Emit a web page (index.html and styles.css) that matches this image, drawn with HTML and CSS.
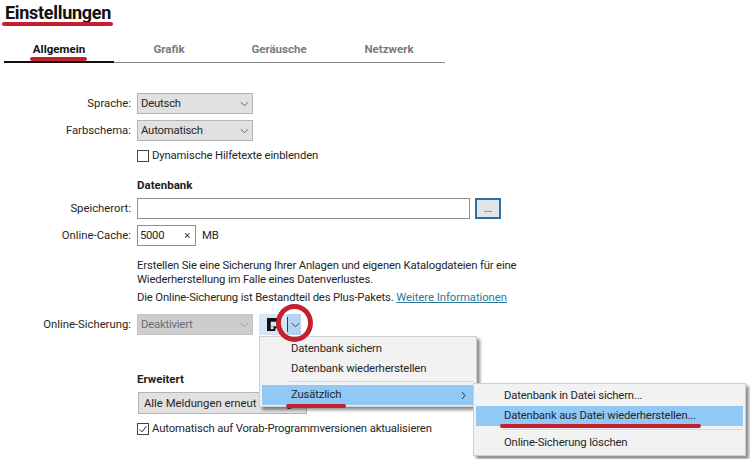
FILE: index.html
```html
<!DOCTYPE html>
<html lang="de">
<head>
<meta charset="utf-8">
<title>Einstellungen</title>
<link rel="stylesheet" href="styles.css">
</head>
<body>
<div class="page">
  <div class="title-row"><h1 class="title">Einstellungen<span class="mark mark-title"></span></h1></div>
  <nav class="tabs">
    <div class="tab active">Allgemein<span class="mark mark-tab"></span></div>
    <div class="tab">Grafik</div>
    <div class="tab">Geräusche</div>
    <div class="tab">Netzwerk</div>
  </nav>
  <main class="form">
    <div class="row row-sprache">
      <label class="label">Sprache:</label>
      <div class="select"><span>Deutsch</span><svg class="chev" viewBox="0 0 10 6"><path d="M1 1l4 4 4-4"/></svg></div>
    </div>
    <div class="row row-farb">
      <label class="label">Farbschema:</label>
      <div class="select"><span>Automatisch</span><svg class="chev" viewBox="0 0 10 6"><path d="M1 1l4 4 4-4"/></svg></div>
    </div>
    <div class="row row-check1">
      <span class="label"></span>
      <div class="check"><span class="box"></span><span>Dynamische Hilfetexte einblenden</span></div>
    </div>
    <div class="row row-head1">
      <span class="label"></span>
      <strong class="heading">Datenbank</strong>
    </div>
    <div class="row row-ort">
      <label class="label">Speicherort:</label>
      <div class="input wide"></div>
      <div class="dots">...</div>
    </div>
    <div class="row row-cache">
      <label class="label">Online-Cache:</label>
      <div class="input cache"><span>5000</span><span class="x">×</span></div>
      <span class="unit">MB</span>
    </div>
    <div class="row row-text">
      <span class="label"></span>
      <div class="notes">
        <p class="note">Erstellen Sie eine Sicherung Ihrer Anlagen und eigenen Katalogdateien für eine<br>Wiederherstellung im Falle eines Datenverlustes.</p>
        <p class="note note-2">Die Online-Sicherung ist Bestandteil des Plus-Pakets. <a class="link">Weitere Informationen</a></p>
      </div>
    </div>
    <div class="row row-backup">
      <label class="label">Online-Sicherung:</label>
      <div class="select disabled"><span>Deaktiviert</span><svg class="chev" viewBox="0 0 10 6"><path d="M1 1l4 4 4-4"/></svg></div>
      <div class="split">
        <span class="split-main">
          <svg class="save" viewBox="0 0 14 14"><path d="M0 0h11l3 3v11H0z"/><rect x="4" y="4" width="8" height="5" fill="#d5e6f6"/><rect x="4" y="9" width="3" height="3" fill="#d5e6f6"/><rect x="9" y="11" width="5" height="3" fill="#d5e6f6"/></svg>
        </span>
        <span class="split-arrow"><span class="split-bar"></span><svg class="chev" viewBox="0 0 10 6"><path d="M1 1l4 4 4-4"/></svg></span>
      </div>
    </div>
    <div class="row row-head2">
      <span class="label"></span>
      <strong class="heading">Erweitert</strong>
    </div>
    <div class="row row-all">
      <span class="label"></span>
      <div class="select all"><span>Alle Meldungen erneut anzeigen</span></div>
    </div>
    <div class="row row-check2">
      <span class="label"></span>
      <div class="check"><span class="box"><svg viewBox="0 0 12 12"><path d="M2 6.500l3 3 5-7"/></svg></span><span>Automatisch auf Vorab-Programmversionen aktualisieren</span></div>
    </div>
  </main>
</div>

<div class="menu menu-main">
  <div class="item">Datenbank sichern</div>
  <div class="item">Datenbank wiederherstellen</div>
  <div class="sep"></div>
  <div class="item hot">Zusätzlich<svg class="more" viewBox="0 0 5 9"><path d="M1 1l3 3.500-3 3.500"/></svg></div>
</div>
<div class="menu menu-sub">
  <div class="item">Datenbank in Datei sichern...</div>
  <div class="item hot">Datenbank aus Datei wiederherstellen...</div>
  <div class="sep"></div>
  <div class="item">Online-Sicherung löschen</div>
</div>

<span class="mark mark-zus"></span>
<span class="mark mark-aus"></span>
<span class="ring"></span>
</body>
</html>
```

FILE: styles.css
```css
* { box-sizing: border-box; }
html, body { margin: 0; padding: 0; background: #fff; }
body {
  width: 750px;
  height: 459px;
  overflow: hidden;
  position: relative;
  font-family: Roboto, "Noto Sans", sans-serif;
  font-size: 11.3px;
  line-height: 15px;
  color: #262626;
}
.page { padding: 1px 0 0 4px; }
.title-row { height: 23px; }
.title {
  position: relative;
  display: inline-block;
  margin: 0;
  padding-left: 1px;
  font-size: 18px;
  line-height: 23px;
  letter-spacing: -.3px;
  font-weight: 700;
  color: #111;
}
.mark { position: absolute; display: block; background: #c4202f; border-radius: 3px; }
.mark-title { left: -2px; right: -2px; top: 21px; height: 4px; }
.tabs {
  display: flex;
  width: 441px;
  margin-top: 14px;
  height: 25px;
  border-bottom: 1px solid #8a8a8a;
}
.tab {
  position: relative;
  width: 110px;
  text-align: center;
  font-weight: 700;
  font-size: 11.5px;
  line-height: 22px;
  color: #7b7b7b;
}
.tab.active { color: #111; border-bottom: 2px solid #111; height: 25px; }
.mark-tab { left: 26px; width: 57px; top: 19px; height: 4px; }
.form { margin-top: 30px; }
.row { display: flex; align-items: center; }
.label { width: 127px; margin-right: 6px; flex: none; text-align: right; white-space: nowrap; }
.select {
  display: flex;
  align-items: center;
  justify-content: space-between;
  width: 116px;
  height: 21px;
  padding: 0 3px 0 3px;
  background: #e1e1e1;
  border: 1px solid #b4b4b4;
  letter-spacing: -.2px;
}
.chev { width: 9px; height: 6px; fill: none; stroke: #555; stroke-width: 1; }
.row-farb { margin-top: 6px; }
.row-check1 { margin-top: 7px; }
.check { display: flex; align-items: center; gap: 3px; white-space: nowrap; letter-spacing: -.14px; }
.box {
  display: block;
  width: 12px;
  height: 12px;
  border: 1px solid #444;
  background: #fff;
}
.box svg { display: block; width: 10px; height: 10px; fill: none; stroke: #333; stroke-width: 1.2; }
.heading { font-weight: 700; color: #222; font-size: 11.5px; }
.row-head1 { margin-top: 15px; }
.row-ort { margin-top: 5px; }
.input { height: 21px; border: 1px solid #8e8e8e; background: #fff; }
.wide { width: 333px; }
.dots {
  width: 26px;
  height: 21px;
  margin-left: 5px;
  border: 2px solid #2f6f9f;
  background: #e1e4e8;
  text-align: center;
  line-height: 18px;
  font-size: 10px;
}
.row-cache { margin-top: 6px; }
.cache {
  display: flex;
  justify-content: space-between;
  align-items: center;
  width: 59px;
  padding: 0 5px 0 2px;
  letter-spacing: -.3px;
}
.x { color: #333; }
.unit { margin-left: 6px; }
.row-text { margin-top: 13px; align-items: flex-start; }
.note { margin: 0; line-height: 14px; white-space: nowrap; letter-spacing: -.15px; }
.note-2 { margin-top: 4px; }
.link { color: #2a7a96; text-decoration: underline; letter-spacing: -.05px; }
.row-backup { margin-top: 9px; }
.disabled { background: #cdcdcd; border-color: #c4c4c4; color: #6d6d6d; }
.disabled .chev { stroke: #9a9a9a; }
.split { display: flex; width: 42px; height: 21px; margin-left: 6px; background: #d5e6f6; }
.split-main { width: 28px; display: flex; align-items: center; justify-content: flex-start; padding-left: 8px; }
.save { width: 13px; height: 13px; fill: #111; }
.split-arrow {
  position: relative;
  width: 14px;
  display: flex;
  align-items: center;
  justify-content: center;
  background: #b5d3f0;
}
.split-bar { position: absolute; left: 0; top: 3px; bottom: 3px; width: 1px; background: #2c3e50; }
.split-arrow .chev { stroke: #333; margin-left: 2px; }
.row-head2 { margin-top: 37px; }
.row-all { margin-top: 5px; }
.all { width: 169px; margin-left: 1px; background: #e1e1e1; padding-left: 5px; white-space: nowrap; overflow: hidden; height: 22px; letter-spacing: 0; }
.row-check2 { margin-top: 7px; }

.menu {
  position: absolute;
  background: #f2f2f2;
  border: 1px solid #cfcfcf;
  box-shadow: 3px 3px 3px rgba(0, 0, 0, .45);
  letter-spacing: -.16px;
}
.menu-main { left: 259px; top: 336px; width: 218px; height: 71px; padding: 2px 2px 1px; }
.menu-sub { left: 473px; top: 383px; width: 273px; height: 73px; padding: 2px; }
.item { position: relative; height: 20px; line-height: 20px; padding-left: 29px; white-space: nowrap; }
.menu-sub .item { padding-left: 28px; }
.hot { background: #90c8f6; }
.sep { height: 1px; margin: 3px 0 3px 27px; background: #d7d7d7; }
.menu-main .sep { margin: 2px 0 3px 27px; }
.more { position: absolute; right: 8px; top: 6px; width: 5px; height: 9px; fill: none; stroke: #333; }

.mark-zus { left: 286px; top: 404px; width: 60px; height: 4px; }
.mark-aus { left: 500px; top: 424px; width: 201px; height: 4px; }
.ring {
  position: absolute;
  left: 276px;
  top: 304px;
  width: 37px;
  height: 38px;
  border: 5px solid #c4202f;
  border-radius: 50%;
}
```
